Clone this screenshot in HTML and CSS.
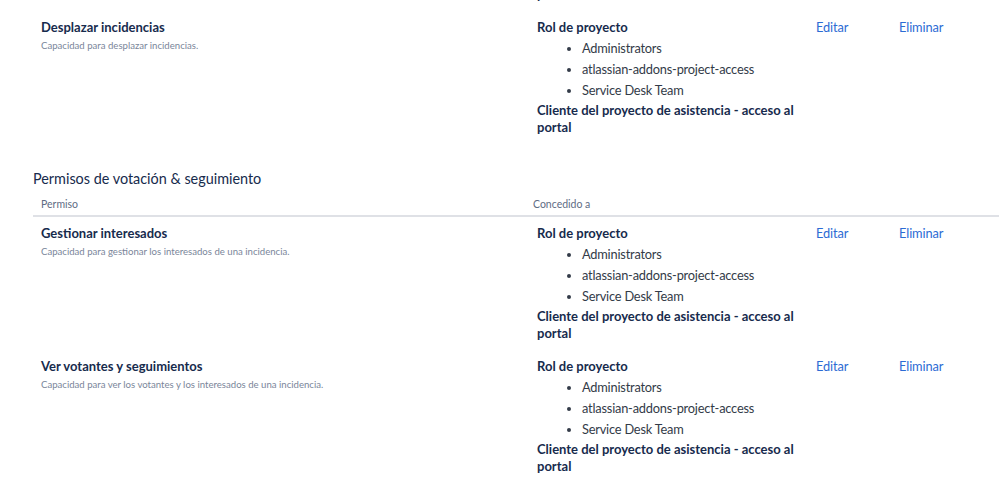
FILE: index.html
```html
<!DOCTYPE html>
<html lang="es">
<head>
<meta charset="utf-8">
<title>Permisos</title>
<link rel="stylesheet" href="styles.css">
</head>
<body>
<div class="page">
  <section class="group">
    <div class="perm-row tail">
      <div class="perm"></div>
      <div class="grant">
        <div class="grant-type tail-text">portal</div>
      </div>
      <div class="act"></div>
      <div class="act"></div>
    </div>
    <div class="perm-row">
      <div class="perm">
        <div class="perm-title">Desplazar incidencias</div>
        <div class="perm-desc">Capacidad para desplazar incidencias.</div>
      </div>
      <div class="grant">
        <div class="grant-type">Rol de proyecto</div>
        <ul class="grant-list">
          <li>Administrators</li>
          <li>atlassian-addons-project-access</li>
          <li>Service Desk Team</li>
        </ul>
        <div class="grant-type grant-extra">Cliente del proyecto de asistencia - acceso al portal</div>
      </div>
      <div class="act"><a href="#">Editar</a></div>
      <div class="act"><a href="#">Eliminar</a></div>
    </div>
  </section>

  <section class="group">
    <h2 class="group-title">Permisos de votación &amp; seguimiento</h2>
    <div class="head-row">
      <div class="head-cell">Permiso</div>
      <div class="head-cell head-grant">Concedido a</div>
      <div class="head-cell"></div>
      <div class="head-cell"></div>
    </div>
    <div class="perm-row">
      <div class="perm">
        <div class="perm-title">Gestionar interesados</div>
        <div class="perm-desc">Capacidad para gestionar los interesados de una incidencia.</div>
      </div>
      <div class="grant">
        <div class="grant-type">Rol de proyecto</div>
        <ul class="grant-list">
          <li>Administrators</li>
          <li>atlassian-addons-project-access</li>
          <li>Service Desk Team</li>
        </ul>
        <div class="grant-type grant-extra">Cliente del proyecto de asistencia - acceso al portal</div>
      </div>
      <div class="act"><a href="#">Editar</a></div>
      <div class="act"><a href="#">Eliminar</a></div>
    </div>
    <div class="perm-row">
      <div class="perm">
        <div class="perm-title">Ver votantes y seguimientos</div>
        <div class="perm-desc">Capacidad para ver los votantes y los interesados de una incidencia.</div>
      </div>
      <div class="grant">
        <div class="grant-type">Rol de proyecto</div>
        <ul class="grant-list">
          <li>Administrators</li>
          <li>atlassian-addons-project-access</li>
          <li>Service Desk Team</li>
        </ul>
        <div class="grant-type grant-extra">Cliente del proyecto de asistencia - acceso al portal</div>
      </div>
      <div class="act"><a href="#">Editar</a></div>
      <div class="act"><a href="#">Eliminar</a></div>
    </div>
  </section>
</div>
</body>
</html>
```

FILE: styles.css
```css
html, body {
  margin: 0;
  padding: 0;
  background: #ffffff;
}

body {
  font-family: "Lato", "Noto Sans", sans-serif;
  color: #172b4d;
  overflow: hidden;
}

.page {
  padding-left: 33px;
}

.tail {
  height: 10.5px;
  padding: 0;
  overflow: hidden;
}

.tail-text {
  margin-top: -14.5px;
}

.group-title {
  margin: 25px 0 0;
  font-size: 14.4px;
  font-weight: 400;
  line-height: 20px;
  color: #172b4d;
}

.perm-row,
.head-row {
  display: grid;
  grid-template-columns: 496px 279px 83px 108px;
}

.head-row {
  margin-top: 3px;
  border-bottom: 2px solid #dfe1e6;
}

.head-cell {
  padding: 4px 8px 3px;
  font-size: 10.5px;
  line-height: 16px;
  color: #5e6c84;
}

.head-grant {
  padding-left: 4px;
}

.perm-row {
  padding: 8px 0 8px;
}

.perm-row.tail {
  padding: 0;
}

.perm,
.grant,
.act {
  padding: 0 8px;
}

.perm-title {
  font-size: 13px;
  font-weight: 700;
  line-height: 17px;
  color: #172b4d;
}

.perm-desc {
  margin-top: 2px;
  font-size: 9.6px;
  line-height: 15px;
  color: #7a869a;
}

.grant-type {
  font-size: 13px;
  font-weight: 700;
  line-height: 17px;
  color: #172b4d;
}

.grant-list {
  margin: 2px 0 0;
  padding-left: 45px;
  list-style: disc;
}

.grant-list li {
  font-size: 12.8px;
  letter-spacing: -0.2px;
  line-height: 21px;
  color: #333b48;
}

.grant-extra {
  margin-top: 1px;
}

.act {
  font-size: 12.8px;
  letter-spacing: -0.1px;
  line-height: 17px;
}

.act a {
  color: #2c6bd4;
  text-decoration: none;
}
```
